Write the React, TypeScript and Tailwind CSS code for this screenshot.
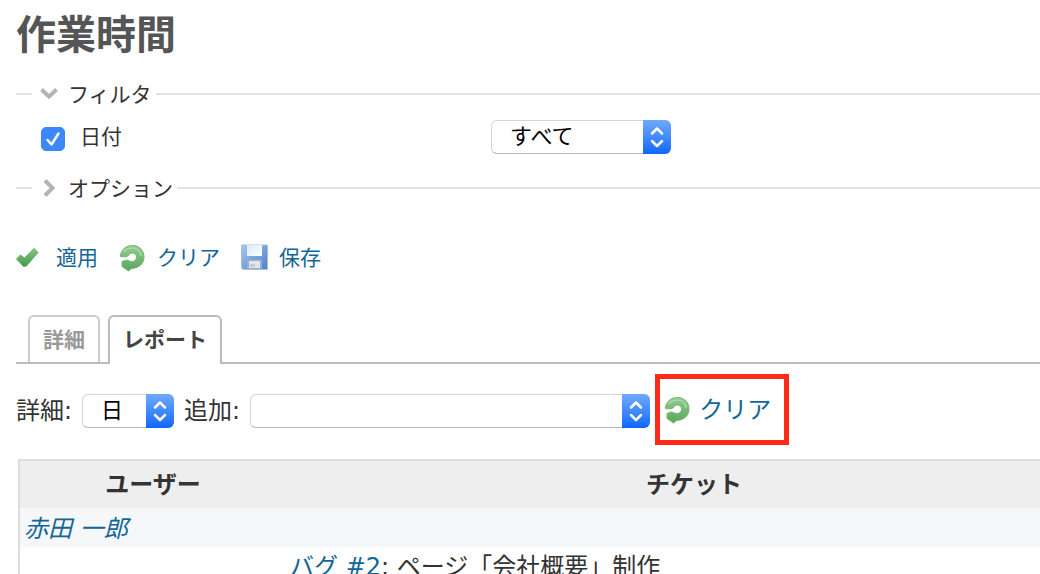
import React, { useState } from 'react';

interface SelectProps {
  label: string;
  options: string[];
  className?: string;
}

const CheckIcon = () => (
  <svg width="24" height="22" viewBox="0 0 24 22" aria-hidden="true">
    <defs>
      <linearGradient id="check" x1="0" y1="0" x2="0" y2="1">
        <stop offset="0" stopColor="#86c487" />
        <stop offset="1" stopColor="#439a48" />
      </linearGradient>
    </defs>
    <path d="M0.500 12 L4.500 8 L8.500 11 L18 1.500 L22 5.500 L10.500 19 L7.500 19.500 Z" fill="url(#check)" stroke="#66b068" strokeLinejoin="round" />
  </svg>
);

const ReloadIcon = () => (
  <svg width="26" height="28" viewBox="0 0 26 28" className="shrink-0" aria-hidden="true">
    <defs>
      <linearGradient id="reload" x1="0" y1="0" x2="0" y2="1">
        <stop offset="0" stopColor="#94cd92" />
        <stop offset="1" stopColor="#58a65b" />
      </linearGradient>
    </defs>
    <path
      d="M1.500 10.500 C3.500 4.500 7.500 1.500 13.500 1.500 C20.500 1.500 25 6.500 25 13 C25 19.500 20.500 24 12.500 24.500 L9.500 27 L3 22.500 L3 17.500 L7.500 16 L12 17.500 C15 18 17.500 16 17.500 13 C17.500 10.500 15.500 9 13.500 9 C11.500 9 10 10 9 12 C6.500 13 3.500 13 1.500 12.500 Z"
      fill="url(#reload)"
      stroke="#76b976"
      strokeLinejoin="round"
    />
    <path d="M5 8 C7 5 10 4 13.500 4 C18.500 4 22 7.500 22 12" fill="none" stroke="#a9d9a5" strokeWidth="1.500" />
  </svg>
);

const SaveIcon = () => (
  <svg width="28" height="28" viewBox="0 0 28 28" aria-hidden="true">
    <defs>
      <linearGradient id="disk" x1="0" y1="0" x2="1" y2="1">
        <stop offset="0" stopColor="#a5c6ec" />
        <stop offset="1" stopColor="#4f82c8" />
      </linearGradient>
      <linearGradient id="disk-label" x1="0" y1="0" x2="1" y2="1">
        <stop offset="0" stopColor="#dce9f8" />
        <stop offset="1" stopColor="#ffffff" />
      </linearGradient>
    </defs>
    <path d="M0.500 1 H26.500 V25.500 H2 L0.500 24 Z" fill="url(#disk)" stroke="#a2bfe4" />
    <path d="M6 1 H21 V12 H6 Z" fill="url(#disk-label)" />
    <path d="M6 15.500 H21 V25 H6 Z" fill="#8fb0dc" />
    <path d="M8 17 H19 V24 H8 Z" fill="#e6e4e2" />
    <path d="M9 20 H14 V23 H9 Z" fill="#c9cccf" />
  </svg>
);

const Chevron = ({ open }: { open: boolean }) => (
  <svg width="20" height="20" viewBox="0 0 20 20" fill="none" stroke="#b4b4b4" strokeWidth="4" aria-hidden="true">
    {open ? <path d="M1.500 4.500 L9 11.500 L16.500 4.500" /> : <path d="M5 1.500 L12.500 9 L5 16.500" />}
  </svg>
);

const Select: React.FC<SelectProps> = ({ label, options, className = '' }) => (
  <div className={`relative h-[34px] ${className}`}>
    <select
      aria-label={label}
      className="block h-full w-full appearance-none rounded-md border border-[#d4d4d4] border-b-[#b8b8b8] bg-white pl-[18px] text-[22px] leading-8 text-black"
    >
      {options.map(option => <option key={option}>{option}</option>)}
    </select>
    <span className="pointer-events-none absolute inset-y-0 right-0 flex w-7 items-center justify-center rounded-r-md bg-linear-to-b from-[#6ea9fc] to-[#0a66ff]">
      <svg width="16" height="24" viewBox="0 0 16 24" fill="none" stroke="#fff" strokeWidth="2.500" strokeLinecap="round" strokeLinejoin="round">
        <path d="M3 8.500 L8 3.500 L13 8.500 M3 16 L8 21 L13 16" />
      </svg>
    </span>
  </div>
);

interface SectionHeaderProps {
  title: string;
  open: boolean;
  onToggle: () => void;
}

const SectionHeader: React.FC<SectionHeaderProps> = ({ title, open, onToggle }) => (
  <div className="flex h-8 items-center">
    <span className="h-[2px] w-4 bg-[#e2e2e2]" />
    <button type="button" aria-expanded={open} onClick={onToggle} className="flex items-center gap-2 px-2 pt-[2px] pr-1 leading-8">
      <Chevron open={open} />
      {title}
    </button>
    <span className="h-[2px] flex-1 bg-[#e2e2e2]" />
  </div>
);

const App: React.FC = () => {
  const [filtersOpen, setFiltersOpen] = useState(true);
  const [optionsOpen, setOptionsOpen] = useState(false);

  return (
    <main className="h-screen overflow-hidden bg-white pl-4 font-['DejaVu_Sans','Noto_Sans_CJK_JP',sans-serif] text-[21px] text-[#333]">
      <h1 className="pt-2 text-[40px] leading-[54px] font-bold text-[#555]">作業時間</h1>

      <div className="pt-4">
        <SectionHeader title="フィルタ" open={filtersOpen} onToggle={() => setFiltersOpen(!filtersOpen)} />
        {filtersOpen && (
          <div className="flex h-[54px] items-center pl-[25px]">
            <label className="flex w-[450px] items-center leading-8">
              <span className="relative mt-1 mr-[15px] size-6">
                <input
                  type="checkbox"
                  defaultChecked
                  className="peer block size-6 appearance-none rounded-[5px] border border-[#bbb] checked:border-[#3b87fd] checked:bg-[#3b87fd]"
                />
                <svg viewBox="0 0 24 24" fill="none" stroke="#fff" strokeWidth="2.500" strokeLinecap="round" strokeLinejoin="round" className="pointer-events-none absolute inset-0 hidden size-6 peer-checked:block">
                  <path d="M6.500 13 L10.500 17.500 L17.500 6.500" />
                </svg>
              </span>
              日付
            </label>
            <Select label="日付の条件" options={['すべて', '今日', '今週', '今月']} className="w-[180px]" />
          </div>
        )}
      </div>
      <div className="pt-2">
        <SectionHeader title="オプション" open={optionsOpen} onToggle={() => setOptionsOpen(!optionsOpen)} />
      </div>

      <div className="flex items-center gap-[21px] pt-9 leading-9 text-[#116699]">
        <a href="#apply" className="flex items-center gap-4"><CheckIcon />適用</a>
        <a href="#clear" className="flex items-center gap-3"><ReloadIcon />クリア</a>
        <a href="#save" className="flex items-center gap-[10px]"><SaveIcon />保存</a>
      </div>

      <nav className="mt-[39px] flex items-end gap-2 border-b-2 border-[#bbb] pl-3 font-bold">
        <a href="#details" className="rounded-t-md border-2 border-b-0 border-[#ccc] px-[13px] pt-[2px] leading-[43px] text-[#999]">詳細</a>
        <a href="#report" className="-mb-[2px] rounded-t-md border-2 border-b-0 border-[#bbb] bg-white px-[13px] pt-[2px] pb-[2px] leading-[43px] text-[#444]">レポート</a>
      </nav>

      <div className="flex items-center pt-[10px] text-2xl">
        <div className="flex items-center gap-[10px] pt-[2px]">
          <span>詳細:</span>
          <Select label="詳細" options={['日', '週', '月', '年']} className="w-[92px]" />
          <span>追加:</span>
          <Select label="追加" options={['', 'ユーザー', 'チケット']} className="w-[400px]" />
        </div>
        <a href="#clear-report" className="ml-[5px] flex h-[71px] w-[134px] items-center gap-[9px] border-[5px] border-[#ff2a1a] pl-1 text-[#116699]">
          <ReloadIcon />
          クリア
        </a>
      </div>

      <div className="mt-[14px] ml-[2px] overflow-hidden border-t-2 border-l-2 border-[#ddd] text-2xl">
        <table className="w-[1082px] table-fixed">
          <thead className="bg-[#eee]">
            <tr className="h-[47px]">
              <th className="w-[266px]">ユーザー</th>
              <th>チケット</th>
            </tr>
          </thead>
          <tbody>
            <tr className="h-[39px] bg-[#f6f7f8]">
              <td className="px-1 pt-[2px]"><a href="#user" className="text-[#116699] italic">赤田 一郎</a></td>
              <td />
            </tr>
            <tr className="h-[39px]">
              <td />
              <td className="px-1"><a href="#issue-2" className="text-[#116699]">バグ #2</a>: ページ「会社概要」制作</td>
            </tr>
          </tbody>
        </table>
      </div>
    </main>
  );
};

export default App;
